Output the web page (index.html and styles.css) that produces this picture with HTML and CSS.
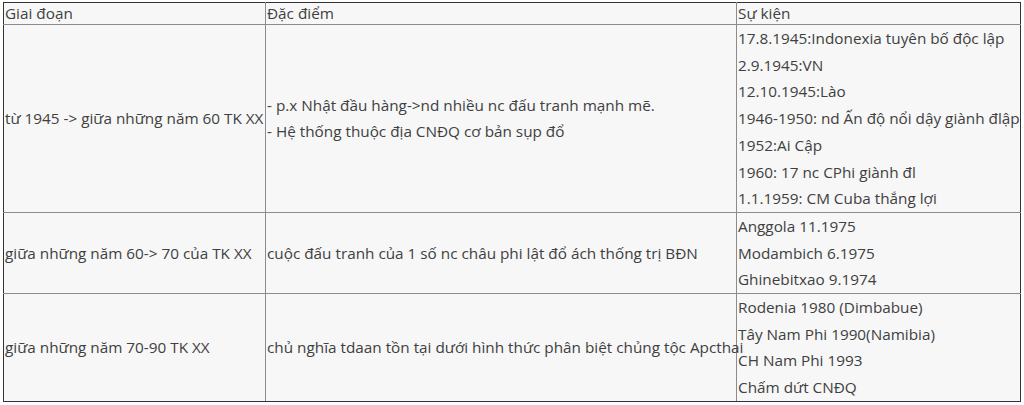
FILE: index.html
```html
<!DOCTYPE html>
<html lang="vi">
<head>
    <meta charset="UTF-8">
    <meta name="viewport" content="width=device-width, initial-scale=1.0">
    <title>Phong trào giải phóng dân tộc</title>
    <link rel="stylesheet" href="styles.css">
</head>
<body>
    <table class="bang">
        <tr class="tieu-de">
            <td class="cot-1">Giai đoạn</td>
            <td class="cot-2">Đặc điểm</td>
            <td class="cot-3">Sự kiện</td>
        </tr>
        <tr>
            <td>từ 1945 -&gt; giữa những năm 60 TK XX</td>
            <td>
                <p>- p.x Nhật đầu hàng-&gt;nd nhiều nc đấu tranh mạnh mẽ.</p>
                <p>- Hệ thống thuộc địa CNĐQ cơ bản sụp đổ</p>
            </td>
            <td>
                <p>17.8.1945:Indonexia tuyên bố độc lập</p>
                <p>2.9.1945:VN</p>
                <p>12.10.1945:Lào</p>
                <p>1946-1950: nd Ấn độ nổi dậy giành đlập</p>
                <p>1952:Ai Cập</p>
                <p>1960: 17 nc CPhi giành đl</p>
                <p>1.1.1959: CM Cuba thắng lợi</p>
            </td>
        </tr>
        <tr>
            <td>giữa những năm 60-&gt; 70 của TK XX</td>
            <td>cuộc đấu tranh của 1 số nc châu phi lật đổ ách thống trị BĐN</td>
            <td>
                <p>Anggola 11.1975</p>
                <p>Modambich 6.1975</p>
                <p>Ghinebitxao 9.1974</p>
            </td>
        </tr>
        <tr>
            <td>giữa những năm 70-90 TK XX</td>
            <td>chủ nghĩa tdaan tồn tại dưới hình thức phân biệt chủng tộc Apcthai</td>
            <td>
                <p>Rodenia 1980 (Dimbabue)</p>
                <p>Tây Nam Phi 1990(Namibia)</p>
                <p>CH Nam Phi 1993</p>
                <p>Chấm dứt CNĐQ</p>
            </td>
        </tr>
    </table>
</body>
</html>
```

FILE: styles.css
```css
*{
    margin: 0;
    padding: 0;
    box-sizing: border-box;
}
body{
    background-color: #fff;
    padding: 2px 0 0 3px;
    font-family: "Open Sans", "Noto Sans", sans-serif;
    font-size: 15.3px;
    color: #404040;
}
.bang{
    width: 1017px;
    border-collapse: collapse;
    background-color: #f7f7f7;
    border: 1px solid #333;
    table-layout: fixed;
}
.bang td{
    border: 1px solid #8c8c8c;
    vertical-align: middle;
    padding: 0 0 0 1px;
    line-height: 26.7px;
    white-space: nowrap;
    overflow: visible;
}
.bang tr td:first-child{
    border-left: 1px solid #333;
}
.bang tr td:last-child{
    border-right: 1px solid #333;
}
.bang tr:first-child td{
    border-top: 1px solid #333;
}
.bang tr:last-child td{
    border-bottom: 1px solid #333;
}
.tieu-de td{
    line-height: 21px;
}
.cot-1{
    width: 262px;
}
.cot-2{
    width: 471px;
}
.cot-3{
    width: 284px;
}
```
